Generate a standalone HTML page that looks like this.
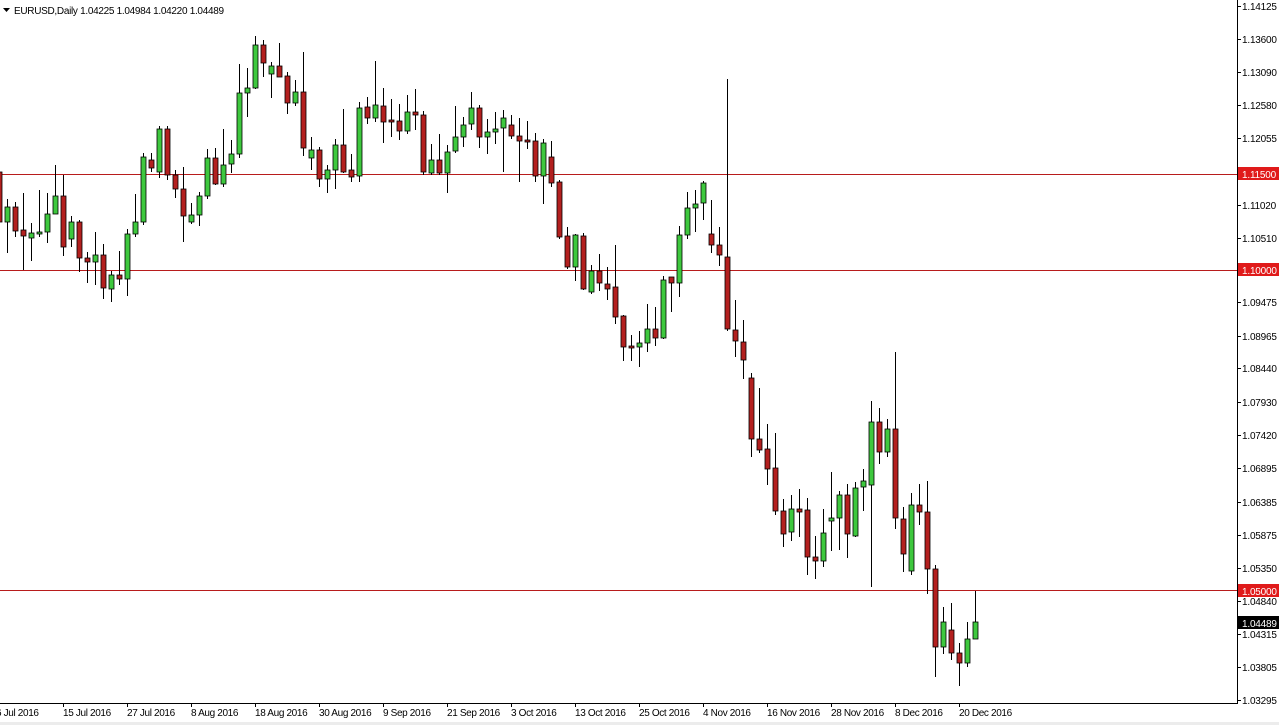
<!DOCTYPE html>
<html><head><meta charset="utf-8"><style>
html,body{margin:0;padding:0;background:#fff;width:1279px;height:725px;overflow:hidden}
svg{display:block}
text{font-family:"Liberation Sans","DejaVu Sans",sans-serif;font-size:10px;fill:#000}
#dt text{letter-spacing:-0.35px}
#ax text{letter-spacing:-0.2px}
</style></head><body>
<svg id="s" width="1279" height="725" viewBox="0 0 1279 725" xmlns="http://www.w3.org/2000/svg">
<rect x="0" y="722" width="1279" height="3" fill="#ececec"/>
<g id="lines">
<line x1="0" y1="174.5" x2="1237" y2="174.5" stroke="#b81c1c" stroke-width="1"/>
<line x1="0" y1="270.5" x2="1237" y2="270.5" stroke="#b81c1c" stroke-width="1"/>
<line x1="0" y1="590.5" x2="1237" y2="590.5" stroke="#b81c1c" stroke-width="1"/>
</g>
<g id="c"></g>
<line x1="1237.5" y1="0" x2="1237.5" y2="703" stroke="#000"/>
<line x1="0" y1="703.5" x2="1238" y2="703.5" stroke="#000"/>
<g id="ticks" stroke="#000"></g>
<g id="ax">
<text x="1242" y="10">1.14125</text>
<text x="1242" y="43">1.13600</text>
<text x="1242" y="76">1.13090</text>
<text x="1242" y="109">1.12580</text>
<text x="1242" y="142">1.12055</text>
<text x="1242" y="209">1.11020</text>
<text x="1242" y="242">1.10510</text>
<text x="1242" y="306">1.09475</text>
<text x="1242" y="340">1.08965</text>
<text x="1242" y="372">1.08440</text>
<text x="1242" y="406">1.07930</text>
<text x="1242" y="439">1.07420</text>
<text x="1242" y="472">1.06895</text>
<text x="1242" y="506">1.06385</text>
<text x="1242" y="539">1.05875</text>
<text x="1242" y="572">1.05350</text>
<text x="1242" y="605">1.04840</text>
<text x="1242" y="638">1.04315</text>
<text x="1242" y="671">1.03805</text>
<text x="1242" y="704">1.03295</text>
<rect x="1238" y="167" width="41" height="13" fill="#e01a1a"/>
<text x="1242" y="178" style="fill:#fff">1.11500</text>
<rect x="1238" y="263" width="41" height="13" fill="#e01a1a"/>
<text x="1242" y="274" style="fill:#fff">1.10000</text>
<rect x="1238" y="584" width="41" height="13" fill="#e01a1a"/>
<text x="1242" y="595" style="fill:#fff">1.05000</text>
<rect x="1238" y="616" width="41" height="13" fill="#000"/>
<text x="1242" y="627" style="fill:#fff">1.04489</text>
</g>
<g id="dt">
<text x="-4" y="716">6 Jul 2016</text>
<text x="63" y="716">15 Jul 2016</text>
<text x="127" y="716">27 Jul 2016</text>
<text x="191" y="716">8 Aug 2016</text>
<text x="255" y="716">18 Aug 2016</text>
<text x="319" y="716">30 Aug 2016</text>
<text x="383" y="716">9 Sep 2016</text>
<text x="447" y="716">21 Sep 2016</text>
<text x="511" y="716">3 Oct 2016</text>
<text x="575" y="716">13 Oct 2016</text>
<text x="639" y="716">25 Oct 2016</text>
<text x="703" y="716">4 Nov 2016</text>
<text x="767" y="716">16 Nov 2016</text>
<text x="831" y="716">28 Nov 2016</text>
<text x="895" y="716">8 Dec 2016</text>
<text x="959" y="716">20 Dec 2016</text>
</g>
<path d="M3 8 L10 8 L6.5 12 Z" fill="#000"/>
<text x="14" y="14" style="font-size:10px;letter-spacing:-0.3px">EURUSD,Daily  1.04225 1.04984 1.04220 1.04489</text>
</svg>
<script>
var d=[
[-1,'r',165,172,222,268],[7,'g',199,207,222,253],[15,'r',202,207,231,237],[23,'r',193,230,236,270],
[31,'g',223,233,238,261],[39,'g',190,232,234,237],[47,'g',193,214,232,243],[55,'g',165,196,214,214],
[63,'r',175,196,247,256],[71,'g',216,222,239,247],[79,'r',220,222,258,272],[87,'r',252,258,262,283],
[95,'g',232,255,262,285],[103,'r',244,255,288,299],[111,'g',271,275,289,302],[119,'r',251,275,279,285],
[127,'g',229,234,279,296],[135,'g',194,222,234,237],[143,'g',153,157,222,225],[151,'r',153,160,168,172],
[159,'g',126,129,172,178],[167,'r',126,129,175,180],[175,'r',170,175,189,198],[183,'r',167,189,216,242],
[191,'g',203,215,222,224],[199,'g',192,196,215,226],[207,'g',149,158,196,199],[215,'r',148,158,184,185],
[223,'g',129,165,184,187],[231,'g',140,154,164,173],[239,'g',64,93,154,158],[247,'g',68,88,93,117],
[255,'g',36,45,88,89],[263,'r',40,45,63,77],[271,'g',62,66,74,98],[279,'r',43,66,77,77],
[287,'r',72,76,103,114],[295,'g',80,92,103,106],[303,'r',52,92,148,156],[311,'g',137,150,158,170],
[319,'r',147,150,179,187],[327,'g',165,170,179,193],[335,'g',139,145,170,189],[343,'r',109,145,172,173],
[351,'r',154,170,177,182],[359,'g',102,108,176,182],[367,'r',97,107,118,124],[375,'g',61,105,118,122],
[383,'r',88,106,122,143],[391,'r',99,120,122,137],[399,'r',104,121,131,140],[407,'g',95,112,131,134],
[415,'r',89,112,115,130],[423,'r',111,115,172,175],[431,'g',144,160,173,175],[439,'r',134,160,173,175],
[447,'g',145,152,173,193],[455,'g',106,137,151,153],[463,'g',117,125,137,147],[471,'g',92,108,124,130],
[479,'r',105,108,137,148],[487,'g',119,132,137,154],[495,'g',112,129,132,144],[503,'g',110,118,128,172],
[511,'r',115,125,136,139],[519,'r',118,136,141,182],[527,'r',121,140,142,149],[535,'r',133,141,176,182],
[543,'g',139,143,176,204],[551,'r',141,157,183,187],[559,'r',180,182,237,239],[567,'r',227,236,267,269],
[575,'g',234,235,267,281],[583,'r',233,236,289,290],[591,'g',265,271,292,294],[599,'r',254,271,283,291],
[607,'r',267,284,289,300],[615,'r',245,287,317,324],[623,'r',315,316,347,361],[631,'r',335,346,348,361],
[639,'g',331,343,347,367],[647,'g',304,329,343,352],[655,'r',307,329,338,346],[663,'g',276,280,338,339],
[671,'r',277,277,283,312],[679,'g',226,235,283,297],[687,'g',192,208,235,239],[695,'g',190,204,208,232],
[703,'g',181,183,203,220],[711,'r',200,234,245,253],[719,'r',227,245,255,266],[727,'r',79,257,329,331],
[735,'r',300,330,341,357],[743,'r',320,342,360,379],[751,'r',373,378,439,457],[759,'r',388,439,450,453],
[767,'r',424,449,469,485],[775,'r',433,468,511,515],[783,'r',499,511,534,547],[791,'g',495,509,532,541],
[799,'r',489,509,512,537],[807,'r',498,510,557,575],[815,'r',536,557,561,579],[823,'g',509,533,561,567],
[831,'g',472,518,521,551],[839,'g',491,495,518,550],[847,'r',484,495,534,558],[855,'g',482,488,536,537],
[863,'g',469,481,487,511],[871,'g',401,422,485,587],[879,'r',408,422,452,464],[887,'g',419,429,452,457],
[895,'r',352,429,518,529],[903,'r',507,519,554,572],[911,'g',493,505,571,575],[919,'r',484,505,512,525],
[927,'r',481,512,569,594],[935,'r',565,569,647,677],[943,'g',607,622,647,654],[951,'r',603,630,653,660],
[959,'r',643,653,663,686],[967,'g',622,639,663,667],[975,'g',591,622,639,639]
];
var s='';
d.forEach(function(c){
 var x=c[0],col=c[1]=='g'?'#3ec83e':'#b3201f';
 s+='<line x1="'+(x+0.5)+'" y1="'+c[2]+'" x2="'+(x+0.5)+'" y2="'+c[5]+'" stroke="#000" stroke-width="1"/>';
 var h=Math.max(c[4]-c[3],1);
 s+='<rect x="'+(x-2)+'" y="'+c[3]+'" width="5" height="'+h+'" fill="'+col+'" stroke="#000" stroke-width="0.8"/>';
});
document.getElementById('c').innerHTML=s;
var t='';
[6,39,72,105,138,205,238,302,336,368,402,435,468,502,535,568,601,634,667,700].forEach(function(y){
 t+='<line x1="1237" y1="'+(y+0.5)+'" x2="1241" y2="'+(y+0.5)+'"/>';
});
for(var k=1;k<16;k++){var x=64*k-1;t+='<line x1="'+(x+0.5)+'" y1="703" x2="'+(x+0.5)+'" y2="707"/>';}
document.getElementById('ticks').innerHTML=t;
</script>
</body></html>
